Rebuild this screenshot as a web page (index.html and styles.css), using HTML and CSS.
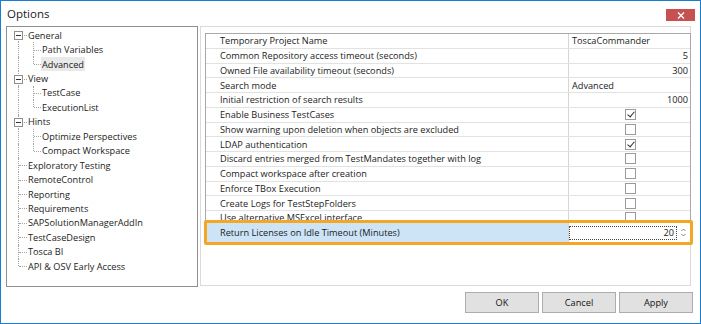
FILE: index.html
```html
<!DOCTYPE html>
<html>
<head>
<meta charset="utf-8">
<link rel="stylesheet" href="styles.css">
</head>
<body>
<div class="window">
  <div class="titlebar">
    <span class="title">Options</span>
    <span class="close"><svg width="8" height="7" viewBox="0 0 8 7"><path d="M1 0.5 L7 6.5 M7 0.5 L1 6.5" stroke="#fff" stroke-width="1.4" fill="none"/></svg></span>
  </div>
  <div class="client">
    <div class="tree">
      <div class="node"><span class="g first"><i class="box"></i></span><span class="lbl">General</span></div>
      <div class="node"><span class="g v"></span><span class="g2 tee"></span><span class="lbl">Path Variables</span></div>
      <div class="node"><span class="g v"></span><span class="g2 ell"></span><span class="lbl sel">Advanced</span></div>
      <div class="node"><span class="g tee"><i class="box"></i></span><span class="lbl">View</span></div>
      <div class="node"><span class="g v"></span><span class="g2 tee"></span><span class="lbl">TestCase</span></div>
      <div class="node"><span class="g v"></span><span class="g2 ell"></span><span class="lbl">ExecutionList</span></div>
      <div class="node"><span class="g tee"><i class="box"></i></span><span class="lbl">Hints</span></div>
      <div class="node"><span class="g v"></span><span class="g2 tee"></span><span class="lbl">Optimize Perspectives</span></div>
      <div class="node"><span class="g v"></span><span class="g2 ell"></span><span class="lbl">Compact Workspace</span></div>
      <div class="node"><span class="g tee"></span><span class="lbl">Exploratory Testing</span></div>
      <div class="node"><span class="g tee"></span><span class="lbl">RemoteControl</span></div>
      <div class="node"><span class="g tee"></span><span class="lbl">Reporting</span></div>
      <div class="node"><span class="g tee"></span><span class="lbl">Requirements</span></div>
      <div class="node"><span class="g tee"></span><span class="lbl">SAPSolutionManagerAddIn</span></div>
      <div class="node"><span class="g tee"></span><span class="lbl">TestCaseDesign</span></div>
      <div class="node"><span class="g tee"></span><span class="lbl">Tosca BI</span></div>
      <div class="node"><span class="g ell"></span><span class="lbl">API &amp; OSV Early Access</span></div>
    </div>
    <div class="panel">
      <div class="grid">
        <div class="row"><span class="name">Temporary Project Name</span><span class="val">ToscaCommander</span></div>
        <div class="row"><span class="name">Common Repository access timeout (seconds)</span><span class="val num">5</span></div>
        <div class="row"><span class="name">Owned File availability timeout (seconds)</span><span class="val num">300</span></div>
        <div class="row"><span class="name">Search mode</span><span class="val">Advanced</span></div>
        <div class="row"><span class="name">Initial restriction of search results</span><span class="val num">1000</span></div>
        <div class="row"><span class="name">Enable Business TestCases</span><span class="val chk"><i class="cb on"></i></span></div>
        <div class="row"><span class="name">Show warning upon deletion when objects are excluded</span><span class="val chk"><i class="cb"></i></span></div>
        <div class="row"><span class="name">LDAP authentication</span><span class="val chk"><i class="cb on"></i></span></div>
        <div class="row"><span class="name">Discard entries merged from TestMandates together with log</span><span class="val chk"><i class="cb"></i></span></div>
        <div class="row"><span class="name">Compact workspace after creation</span><span class="val chk"><i class="cb"></i></span></div>
        <div class="row"><span class="name">Enforce TBox Execution</span><span class="val chk"><i class="cb"></i></span></div>
        <div class="row"><span class="name">Create Logs for TestStepFolders</span><span class="val chk"><i class="cb"></i></span></div>
        <div class="row"><span class="name">Use alternative MSExcel interface</span><span class="val chk"><i class="cb"></i></span></div>
        <div class="row hl"><span class="name">Return Licenses on Idle Timeout (Minutes)</span><span class="val edit"><span class="editbox">20</span><span class="spin"><svg width="7" height="11" viewBox="0 0 7 11"><path d="M1.5 4 L3.5 2 L5.5 4 M1.5 7 L3.5 9 L5.5 7" stroke="#8a8a8a" stroke-width="1" fill="none"/></svg></span></span></div>
      </div>
    </div>
  </div>
  <div class="footer">
    <button class="btn">OK</button>
    <button class="btn">Cancel</button>
    <button class="btn">Apply</button>
  </div>
</div>
</body>
</html>
```
FILE: styles.css
```css
* { box-sizing: border-box; }
html, body { margin: 0; padding: 0; }
body {
  width: 701px;
  height: 324px;
  overflow: hidden;
  background: #fff;
  font-family: "Open Sans", "Noto Sans", sans-serif;
  font-size: 9.2px;
  color: #1b1b1b;
}
.window {
  width: 701px;
  height: 324px;
  border: 1px solid #1a7dd0;
  display: flex;
  flex-direction: column;
  background: #fff;
}
.titlebar {
  height: 25px;
  flex: none;
  display: flex;
  align-items: flex-start;
  justify-content: space-between;
  padding: 0 5px 0 6px;
}
.title {
  font-size: 11.5px;
  line-height: 14px;
  margin-top: 6px;
  color: #222;
}
.close {
  width: 29px;
  height: 12px;
  margin-top: 8px;
  background: #c75050;
  display: flex;
  align-items: center;
  justify-content: center;
}
.close svg { display: block; }
.client {
  height: 261px;
  flex: none;
  display: flex;
  align-items: flex-start;
  gap: 2px;
  padding: 0 9px 0 5px;
}
.tree {
  width: 192px;
  height: 261px;
  flex: none;
  border: 1px solid #8f8f8f;
  padding-top: 1px;
  background: #fff;
}
.node {
  height: 14.44px;
  display: flex;
}
.g, .g2 {
  position: relative;
  flex: none;
  height: 100%;
}
.g { width: 20px; }
.g2 { width: 14px; }
.g::before, .g2::before {
  content: "";
  position: absolute;
  border-left: 1px dotted #a3a3a3;
}
.g::before { left: 11px; }
.g2::before { left: 6px; }
.v::before, .tee::before { top: 0; bottom: 0; }
.ell::before { top: 0; height: 50%; }
.first::before { top: 50%; bottom: 0; }
.tee::after, .ell::after, .first::after {
  content: "";
  position: absolute;
  top: 50%;
  border-top: 1px dotted #a3a3a3;
}
.g.tee::after, .g.ell::after, .g.first::after { left: 12px; width: 8px; }
.g2.tee::after, .g2.ell::after { left: 7px; width: 7px; }
.box {
  position: absolute;
  left: 7px;
  top: calc(50% - 4px);
  width: 9px;
  height: 9px;
  border: 1px solid #8e8e8e;
  background: #fff;
  z-index: 1;
}
.box::before {
  content: "";
  position: absolute;
  left: 1px;
  top: 3px;
  width: 5px;
  height: 1px;
  background: #333;
}
.lbl {
  display: flex;
  align-items: center;
  padding: 0 1px;
  white-space: nowrap;
}
.sel { background: #e9e9e9; }
.panel {
  flex: 1;
  height: 260px;
  border: 1px solid #dadada;
  padding: 6px 0 0 4px;
  background: #fff;
}
.grid {
  margin-right: -1px;
  border: 1px solid #a9a9a9;
  border-bottom: none;
}
.row {
  display: flex;
  height: 14.75px;
  border-bottom: 1px solid #e2e2e2;
}
.name {
  width: 363px;
  flex: none;
  padding-left: 14px;
  border-right: 1px solid #d6d6d6;
  display: flex;
  align-items: center;
  white-space: nowrap;
  overflow: hidden;
}
.val {
  flex: 1;
  display: flex;
  align-items: center;
  padding: 0 2px 0 3px;
  white-space: nowrap;
}
.num { justify-content: flex-end; }
.chk { justify-content: center; padding: 0 0 0 1px; }
.cb {
  width: 11px;
  height: 11px;
  border: 1px solid #9a9a9a;
  background: #fff;
  position: relative;
}
.cb.on::after {
  content: "";
  position: absolute;
  left: 3px;
  top: 0px;
  width: 3px;
  height: 6px;
  border-right: 1.5px solid #2b2b2b;
  border-bottom: 1.5px solid #2b2b2b;
  transform: rotate(40deg);
}
.row.hl {
  height: 19px;
  margin-top: -3px;
  position: relative;
  border-bottom: none;
}
.row.hl::after {
  content: "";
  position: absolute;
  left: -2px;
  right: -3px;
  top: -3px;
  bottom: -3px;
  border: 3px solid #f5a623;
  border-radius: 2px;
}
.row.hl .name { background: #cde4f7; }
.val.edit {
  background: #fff;
  padding: 3px 1px 2px 0;
  align-items: stretch;
}
.editbox {
  flex: 1;
  border: 1px dotted #444;
  display: flex;
  align-items: center;
  justify-content: flex-end;
  padding-right: 2px;
}
.spin {
  width: 12px;
  flex: none;
  display: flex;
  align-items: center;
  justify-content: center;
}
.spin svg { display: block; }
.footer {
  flex: 1;
  display: flex;
  justify-content: flex-end;
  align-items: flex-start;
  gap: 3px;
  padding: 5px 7px 0 0;
}
.btn {
  width: 74px;
  height: 21px;
  background: #e1e1e1;
  border: 1px solid #adadad;
  font-family: inherit;
  font-size: 9.2px;
  color: #111;
  padding: 0;
  margin: 0;
}
```
